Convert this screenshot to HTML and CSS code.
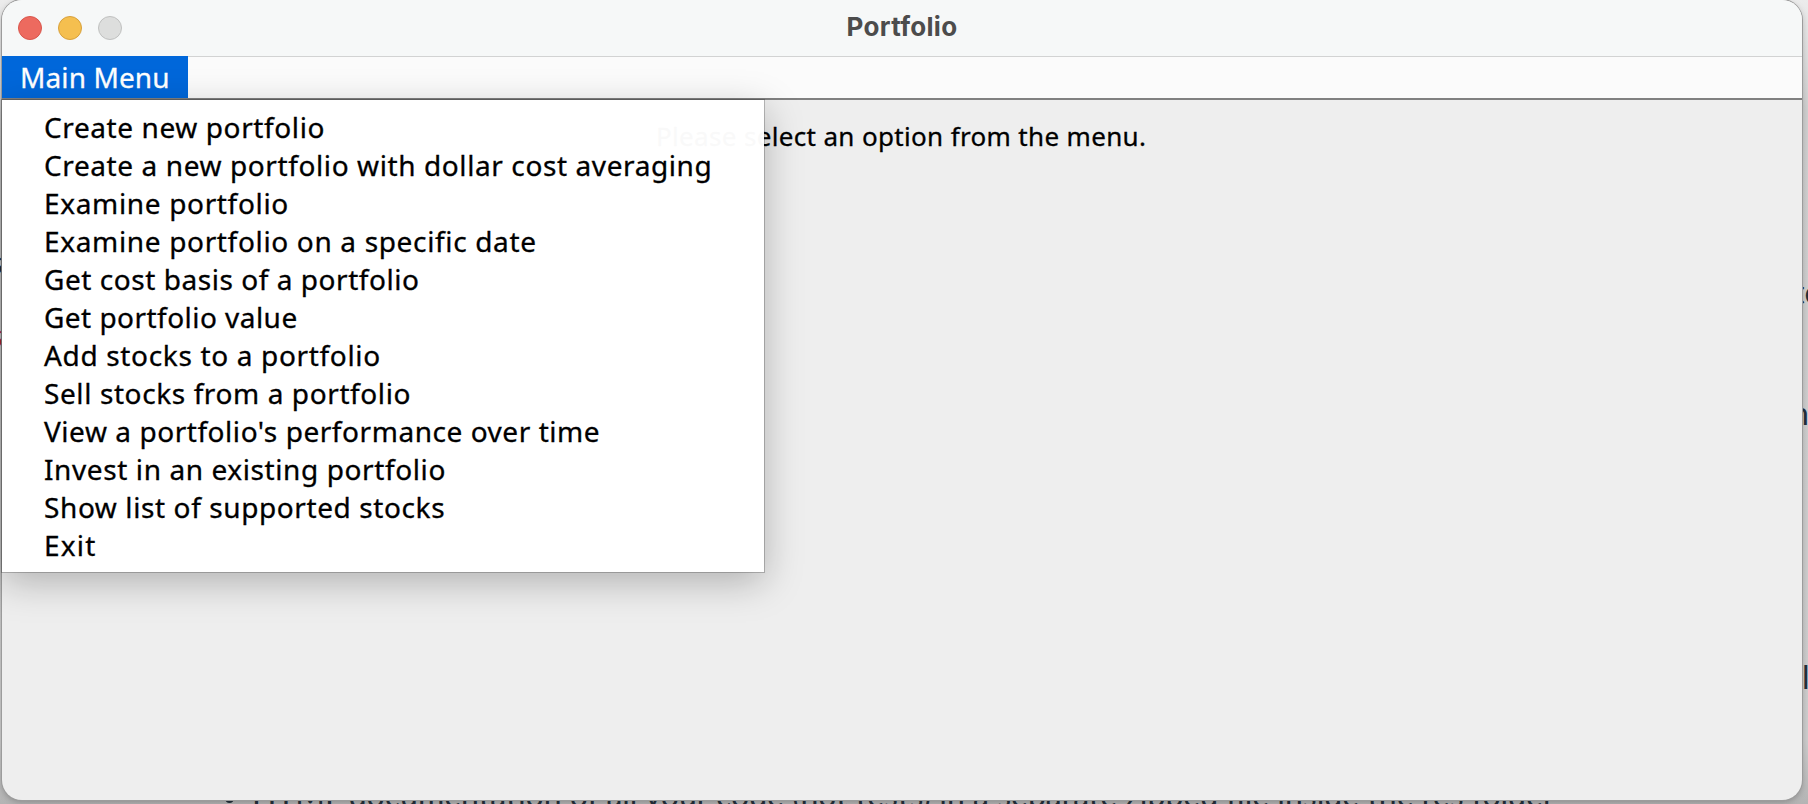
FILE: index.html
```html
<!DOCTYPE html>
<html lang="en">
<head>
<meta charset="utf-8">
<title>Portfolio</title>
<link rel="stylesheet" href="styles.css">
</head>
<body>
<div class="desktop">
  <span class="behind left-a">s</span>
  <span class="behind left-b">s</span>
  <span class="behind right-a">to</span>
  <span class="behind right-b">n</span>
  <span class="behind right-c">l</span>
  <span class="bullet"></span>
  <span class="behind bottom-line">HTML documentation of all your code (not tests) in a separate zipped file inside the res folder</span>
  <main class="window">
    <header class="titlebar">
      <div class="lights"><i class="light close"></i><i class="light minimize"></i><i class="light disabled"></i></div>
      <h1 class="title"><span>Portfolio</span></h1>
    </header>
    <nav class="menubar"><span class="menu-button"><span>Main Menu</span></span></nav>
    <section class="content">
      <p class="hint"><span>Please select an option from the menu.</span></p>
      <ul class="menu">
        <li><span>Create new portfolio</span></li>
        <li><span>Create a new portfolio with dollar cost averaging</span></li>
        <li><span>Examine portfolio</span></li>
        <li><span>Examine portfolio on a specific date</span></li>
        <li><span>Get cost basis of a portfolio</span></li>
        <li><span>Get portfolio value</span></li>
        <li><span>Add stocks to a portfolio</span></li>
        <li><span>Sell stocks from a portfolio</span></li>
        <li><span>View a portfolio's performance over time</span></li>
        <li><span>Invest in an existing portfolio</span></li>
        <li><span>Show list of supported stocks</span></li>
        <li><span>Exit</span></li>
      </ul>
    </section>
  </main>
</div>
</body>
</html>
```

FILE: styles.css
```css
* { box-sizing: border-box; }
body { margin: 0; font-family: "Noto Sans", sans-serif; color: #000; }
.desktop {
  position: relative;
  width: 1808px;
  height: 804px;
  padding: 0 6px 4px 2px;
  overflow: hidden;
  background: linear-gradient(#ececec, #cfcfcf 110px, #cccccc 740px, #b4b4b4);
}
.behind {
  position: absolute;
  font-family: Lato, sans-serif;
  font-size: 32px;
  line-height: 40px;
  color: #232f3b;
  white-space: nowrap;
}
.left-a { left: -11px; top: 242px; }
.left-b { left: -11px; top: 315px; color: #b3262c; }
.right-a { left: 1793px; top: 272px; }
.right-b { left: 1791px; top: 393px; }
.right-c { left: 1802px; top: 657px; }
.bottom-line { left: 252px; top: 775px; }
.bullet {
  position: absolute;
  left: 225px;
  top: 794px;
  width: 9px;
  height: 9px;
  border-radius: 50%;
  background: #232f3b;
}
.window {
  position: relative;
  display: flex;
  flex-direction: column;
  height: 800px;
  border-radius: 20px;
  background: #eeeeee;
  box-shadow: 0 0 0 1px #9c9c9c, 0 2px 6px rgba(0, 0, 0, 0.25);
}
.titlebar {
  display: grid;
  grid-template-columns: 1fr auto 1fr;
  height: 57px;
  padding: 0 16px;
  border-bottom: 1px solid #d2d3d3;
  border-radius: 20px 20px 0 0;
  background: #f6f8f8;
}
.lights { display: flex; gap: 16px; padding-top: 16px; }
.light { width: 24px; height: 24px; border: 1px solid; border-radius: 50%; }
.close { background: #ed6a5f; border-color: #d9564c; }
.minimize { background: #f5bf4f; border-color: #d8a13c; }
.disabled { background: #dddedd; border-color: #c0c1c0; }
.title {
  margin: 0;
  font: 700 26px/54px Inter, sans-serif;
  letter-spacing: 0.3px;
  color: #4c4c4c;
}
.menubar {
  display: flex;
  height: 43px;
  border-bottom: 2px solid #808080;
  background: #fbfbfb;
}
.menu-button {
  width: 186px;
  margin-top: -1px;
  padding-left: 18px;
  font-size: 28px;
  line-height: 42px;
  letter-spacing: 0.1px;
  color: #fff;
  white-space: nowrap;
  background: #0067da;
  -webkit-text-stroke: 0.3px;
}
.content { position: relative; flex: 1; }
.hint {
  margin: 0;
  padding: 18px 0 0 654px;
  font-size: 26px;
  line-height: 36px;
  letter-spacing: 0.34px;
  white-space: nowrap;
  -webkit-text-stroke: 0.3px;
}
.menu {
  position: absolute;
  left: 0;
  top: 0;
  width: 762px;
  height: 472px;
  margin: 0;
  padding: 8px 0 0 42px;
  list-style: none;
  background: rgba(255, 255, 255, 0.975);
  box-shadow: 0 0 0 1px rgba(0, 0, 0, 0.22), 0 10px 36px rgba(0, 0, 0, 0.26);
}
.menu li {
  height: 38px;
  font-size: 28px;
  line-height: 38px;
  letter-spacing: 0.6px;
  white-space: nowrap;
  -webkit-text-stroke: 0.3px;
}
.menu li:nth-child(3), .menu li:nth-child(4), .menu li:nth-child(7) { letter-spacing: 0.66px; }
.menu li:nth-child(5), .menu li:nth-child(9) { letter-spacing: 0.55px; }
.menu li:nth-child(6) { letter-spacing: 0.46px; }
.menu li:nth-child(12) { letter-spacing: 1.2px; }
```
